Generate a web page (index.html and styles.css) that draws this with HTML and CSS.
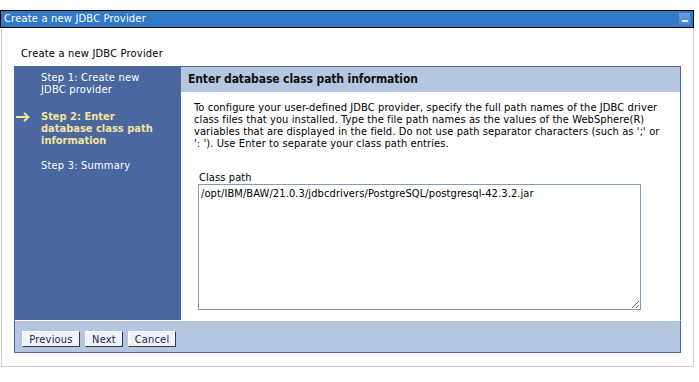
FILE: index.html
```html
<!DOCTYPE html>
<html>
<head>
<meta charset="utf-8">
<link rel="stylesheet" href="styles.css">
</head>
<body>
<div class="window">
  <div class="titlebar">
    <span class="title-text">Create a new JDBC Provider</span>
    <span class="min-btn"><span class="min-dash"></span></span>
  </div>
  <div class="panel">
    <div class="page-title">Create a new JDBC Provider</div>
    <div class="wizard">
      <div class="wiz-main">
        <div class="steps">
          <div class="step step-1">Step 1: Create new<br>JDBC provider</div>
          <div class="step step-2 current"><svg class="arrow" width="14" height="10" viewBox="0 0 14 10"><path d="M0 5 H12 M8 1 L12.5 5 L8 9" fill="none" stroke="#f4e49c" stroke-width="2"/></svg>Step 2: Enter<br>database class path<br>information</div>
          <div class="step step-3">Step 3: Summary</div>
        </div>
        <div class="content">
          <div class="content-head">Enter database class path information</div>
          <div class="content-body">
            <p class="intro">To configure your user-defined JDBC provider, specify the full path names of the JDBC driver<br>class files that you installed. Type the file path names as the values of the WebSphere(R)<br>variables that are displayed in the field. Do not use path separator characters (such as ';' or<br>': '). Use Enter to separate your class path entries.</p>
            <label class="field-label" for="cp">Class path</label>
            <textarea id="cp" class="field">/opt/IBM/BAW/21.0.3/jdbcdrivers/PostgreSQL/postgresql-42.3.2.jar</textarea>
          </div>
        </div>
      </div>
      <div class="buttons">
        <button class="btn btn-prev">Previous</button>
        <button class="btn btn-next">Next</button>
        <button class="btn btn-cancel">Cancel</button>
      </div>
    </div>
  </div>
</div>
</body>
</html>
```
FILE: styles.css
```css
html, body {
  margin: 0;
  padding: 0;
  background: #ffffff;
}
body {
  font-family: "DejaVu Sans Condensed", "DejaVu Sans", sans-serif;
  font-size: 11px;
  letter-spacing: 0.1px;
  color: #000;
}
.window {
  width: 694px;
  padding-top: 10px;
}
.titlebar {
  height: 16px;
  border: 1px solid #000;
  background: #3279c7;
  display: flex;
  align-items: center;
  justify-content: space-between;
}
.title-text {
  color: #fff;
  padding-left: 3px;
  line-height: 16px;
  letter-spacing: 0.2px;
}
.min-btn {
  width: 11px;
  height: 12px;
  margin-right: 3px;
  background: linear-gradient(#6c9ad6, #4f86cc);
  display: flex;
  align-items: flex-end;
  justify-content: center;
}
.min-dash {
  width: 6px;
  height: 2px;
  background: #e8f0fb;
  margin-bottom: 3px;
}
.panel {
  margin-left: 1px;
  width: 679px;
  height: 338px;
  border-left: 1px solid #cfcfcf;
  border-right: 1px solid #cfcfcf;
  border-bottom: 1px solid #cfcfcf;
  padding: 0 0 0 12px;
  box-sizing: content-box;
}
.page-title {
  padding-top: 19px;
  padding-left: 7px;
  line-height: 13px;
  height: 13px;
  margin-bottom: 6px;
  letter-spacing: 0.2px;
}
.wizard {
  width: 667px;
}
.wiz-main {
  display: flex;
  height: 254px;
}
.steps {
  width: 167px;
  background: #4b67a0;
  color: #fff;
  padding-top: 6px;
  box-sizing: border-box;
}
.step {
  position: relative;
  padding-left: 27px;
  line-height: 12px;
  letter-spacing: 0.2px;
}
.step-2 {
  margin-top: 15px;
  color: #f4e49c;
  font-weight: bold;
  letter-spacing: 0;
}
.step-3 {
  margin-top: 13px;
}
.arrow {
  position: absolute;
  left: 2px;
  top: 1px;
}
.content {
  flex: 1;
  border-top: 1px solid #4b67a0;
  border-right: 1px solid #4b67a0;
  background: #fff;
  display: flex;
  flex-direction: column;
}
.content-head {
  height: 25px;
  background: #b5c7e0;
  font-weight: bold;
  font-size: 12px;
  letter-spacing: -0.1px;
  line-height: 25px;
  padding-left: 7px;
  color: #111;
}
.content-body {
  padding: 10px 0 0 13px;
  display: flex;
  flex-direction: column;
  align-items: flex-start;
}
.intro {
  margin: 0;
  line-height: 12px;
}
.field-label {
  margin-top: 22px;
  margin-left: 5px;
  line-height: 12px;
}
.field {
  margin: 0 0 0 4px;
  width: 443px;
  height: 126px;
  box-sizing: border-box;
  border: 1px solid #7f9db9;
  font-family: inherit;
  font-size: 11px;
  letter-spacing: 0.1px;
  padding: 2px 2px;
  line-height: 13px;
  resize: both;
  color: #000;
}
.buttons {
  height: 33px;
  box-sizing: border-box;
  background: #b5c7e0;
  border-top: 1px solid #ffffff;
  border-left: 1px solid #4b67a0;
  border-right: 1px solid #4b67a0;
  border-bottom: 1px solid #4b67a0;
  display: flex;
  align-items: flex-start;
  gap: 5px;
  padding: 10px 0 0 7px;
}
.btn {
  font-family: inherit;
  font-size: 11px;
  letter-spacing: 0.2px;
  height: 16px;
  line-height: 13px;
  padding: 0;
  background: #eef2fa;
  color: #1c2950;
  border-top: 1px solid #ffffff;
  border-left: 1px solid #ffffff;
  border-right: 1px solid #3a3a3a;
  border-bottom: 1px solid #3a3a3a;
  box-sizing: border-box;
}
.btn-prev { width: 58px; }
.btn-next { width: 38px; }
.btn-cancel { width: 48px; }
```
